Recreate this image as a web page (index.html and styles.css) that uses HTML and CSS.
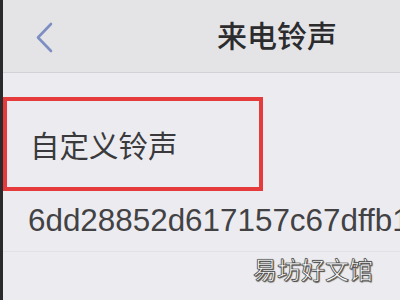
FILE: index.html
```html
<!DOCTYPE html>
<html lang="zh">
<head>
<meta charset="utf-8">
<link rel="stylesheet" href="styles.css">
</head>
<body>
<div class="screen">
  <div class="page">
    <header class="header">
      <svg class="back" width="20" height="32" viewBox="0 0 20 32">
        <polyline points="16,2 3,15.5 16,29" fill="none" stroke="#7d8ec2" stroke-width="2.6" stroke-linecap="round" stroke-linejoin="round"/>
      </svg>
      <h1 class="title">来电铃声</h1>
    </header>
    <div class="list">
      <div class="row row-custom">自定义铃声</div>
      <div class="row row-hash">6dd28852d617157c67dffb1</div>
      <div class="row row-system">系统铃声</div>
    </div>
  </div>
  <div class="watermark">易坊好文馆</div>
</div>
</body>
</html>
```

FILE: styles.css
```css
html, body {
  margin: 0;
  padding: 0;
  width: 400px;
  height: 300px;
  overflow: hidden;
  background: #ebebef;
}

.screen {
  position: relative;
  display: flex;
  height: 300px;
  border-left: 3px solid #2a2a2c;
  box-sizing: border-box;
  font-family: "Liberation Sans", "Noto Sans CJK SC", sans-serif;
  color: #343436;
}

.page {
  flex: 1;
  display: flex;
  flex-direction: column;
  background: #ececf0;
}

.header {
  height: 72px;
  flex: none;
  display: flex;
  align-items: center;
  background: #e4e4e6;
  border-bottom: 1px solid #d2d2d4;
  padding-left: 32px;
}

.back {
  display: block;
  margin-top: 4px;
}

.title {
  margin: -4px 0 0 162px;
  font-family: "Noto Sans CJK SC", sans-serif;
  font-size: 30px;
  font-weight: 500;
  line-height: 1;
  color: #2c2c2e;
}

.list {
  display: flex;
  flex-direction: column;
  padding-top: 24px;
}

.row {
  display: flex;
  align-items: center;
  white-space: nowrap;
}

.row-custom {
  width: 260px;
  height: 94px;
  box-sizing: border-box;
  border: 4px solid #e63b3d;
  padding-left: 23px;
  font-family: "Noto Sans CJK SC", sans-serif;
  font-size: 29.5px;
  color: #3a3a3c;
}

.row-hash {
  height: 60px;
  padding-left: 25px;
  font-size: 31.4px;
  color: #424244;
  border-bottom: 1px solid #e2e2e6;
}

.row-system {
  padding-left: 28px;
  padding-top: 40px;
  font-family: "Noto Sans CJK SC", sans-serif;
  font-size: 29px;
  color: #3a3a3c;
}

.watermark {
  position: absolute;
  left: 250px;
  top: 253px;
  font-family: "Noto Sans CJK SC", sans-serif;
  font-size: 24px;
  line-height: 32px;
  color: #ffffff;
  -webkit-text-stroke: 0.6px #444;
  text-shadow: 0 0 1px #333, 1px 1px 1px #555;
}
```
